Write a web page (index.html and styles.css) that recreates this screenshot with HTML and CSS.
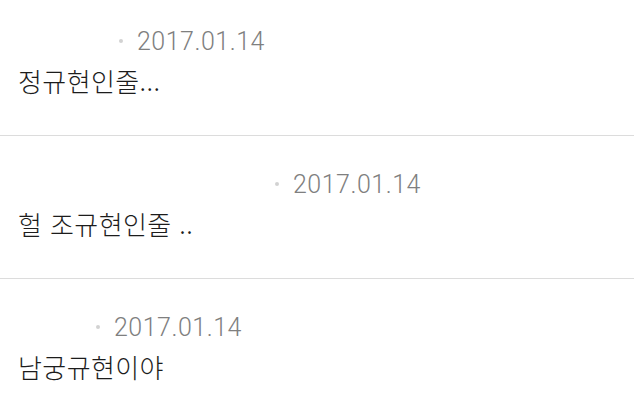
FILE: index.html
```html
<!DOCTYPE html>
<html lang="ko">
<head>
    <meta charset="UTF-8">
    <meta name="viewport" content="width=device-width, initial-scale=1.0">
    <title>댓글</title>
    <link rel="stylesheet" href="styles.css">
</head>
<body>
    <ul class="comment-list">
        <li class="comment">
            <div class="comment-meta">
                <span class="comment-author author-1"></span>
                <span class="meta-dot"></span>
                <span class="comment-date">2017.01.14</span>
            </div>
            <p class="comment-text">정규현인줄...</p>
        </li>
        <li class="comment">
            <div class="comment-meta">
                <span class="comment-author author-2"></span>
                <span class="meta-dot"></span>
                <span class="comment-date">2017.01.14</span>
            </div>
            <p class="comment-text">헐 조규현인줄 ..</p>
        </li>
        <li class="comment">
            <div class="comment-meta">
                <span class="comment-author author-3"></span>
                <span class="meta-dot"></span>
                <span class="comment-date">2017.01.14</span>
            </div>
            <p class="comment-text">남궁규현이야</p>
        </li>
    </ul>
</body>
</html>
```

FILE: styles.css
```css
* {
    margin: 0;
    padding: 0;
    box-sizing: border-box;
}

body {
    font-family: Roboto, "Noto Sans CJK KR", sans-serif;
    background: #fff;
    color: #1a1a1a;
    overflow: hidden;
}

.comment-list {
    list-style: none;
    margin-top: -7px;
}

.comment {
    height: 143px;
    padding: 28px 18px 0;
    border-bottom: 1px solid #dcdcdc;
}

.comment-meta {
    display: flex;
    align-items: center;
    height: 40px;
}

.comment-author {
    display: inline-block;
    height: 20px;
}

.author-1 { width: 91px; }
.author-2 { width: 247px; }
.author-3 { width: 68px; }

.meta-dot {
    width: 4px;
    height: 4px;
    border-radius: 50%;
    background: #d2d2d2;
    margin: 0 14px 0 10px;
}

.comment-date {
    font-size: 25px;
    font-weight: 300;
    color: #7f7f7f;
    letter-spacing: 0.5px;
}

.comment-text {
    font-family: "Noto Sans CJK KR", sans-serif;
    font-size: 26px;
    font-weight: 300;
    line-height: 40px;
    letter-spacing: 0.4px;
    color: #1c1c1c;
}
```
